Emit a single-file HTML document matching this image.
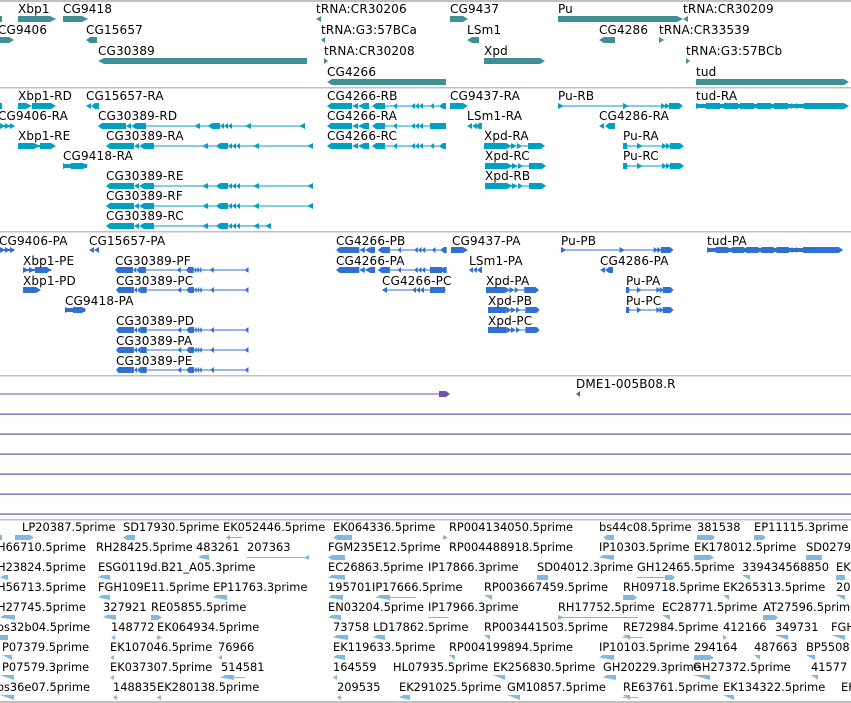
<!DOCTYPE html>
<html><head><meta charset="utf-8"><style>
html,body{margin:0;padding:0;background:#fff;width:851px;height:703px;overflow:hidden}
svg{display:block}
text{font-family:"DejaVu Sans","Liberation Sans",sans-serif;font-size:12px;fill:#000;letter-spacing:0.15px}
.e text{font-size:11.4px;letter-spacing:0}
</style></head><body>
<svg width="851" height="703" viewBox="0 0 851 703" xmlns="http://www.w3.org/2000/svg">
<defs>
<g id="t303">
<polygon points="0,0 4,-3 28,-3 28,3 4,3"/>
<polygon points="28,0 33,-3 33,3"/><polygon points="33,0 38,-3 38,3"/>
<rect x="38" y="-3" width="10" height="6"/>
<rect x="48" y="-0.5" width="159" height="1"/>
<polygon points="96,0 102,-3 102,3"/>
<polygon points="110,0 114,-3 122,-3 122,3 114,3"/>
<polygon points="122,0 126,-3 126,3"/><polygon points="126,0 130,-3 130,3"/><polygon points="130,0 134,-3 134,3"/>
<polygon points="147,0 153,-3 153,3"/>
<polygon points="201,0 207,-3 207,3"/>
</g>
<g id="t303s">
<polygon points="0,0 4,-3 28,-3 28,3 4,3"/>
<polygon points="28,0 33,-3 33,3"/><polygon points="33,0 38,-3 38,3"/>
<rect x="38" y="-3" width="10" height="6"/>
<rect x="48" y="-0.5" width="117" height="1"/>
<polygon points="96,0 102,-3 102,3"/>
<polygon points="110,0 114,-3 122,-3 122,3 114,3"/>
<polygon points="122,0 126,-3 126,3"/><polygon points="126,0 130,-3 130,3"/><polygon points="130,0 134,-3 134,3"/>
<polygon points="147,0 153,-3 153,3"/>
<polygon points="159,0 165,-3 165,3"/>
</g>
<g id="t4266">
<polygon points="0,0 4,-3 25,-3 25,3 4,3"/>
<polygon points="25,0 31,-3 31,3"/><polygon points="31,0 37,-3 37,3"/><rect x="37" y="-3" width="5" height="6"/>
<polygon points="45,0 49,-3 58,-3 58,3 49,3"/>
<rect x="58" y="-0.5" width="61" height="1"/>
<polygon points="66,0 70,-3 70,3"/>
<polygon points="84,0 88,-3 88,3"/><polygon points="88,0 92,-3 92,3"/><polygon points="92,0 96,-3 96,3"/>
<polygon points="103,0 107,-3 107,3"/>
<polygon points="112,0 116,-3 119,-3 119,3 116,3"/>
</g>
<g id="tXpd">
<polygon points="0,-3 6,0 0,3"/><polygon points="5,-3 11,0 5,3"/><polygon points="10,-3 16,0 10,3"/><polygon points="15,-3 21,0 15,3"/>
<rect x="0" y="-3" width="22" height="6"/>
<polygon points="22,-3 28,0 22,3"/><polygon points="27,-3 33,0 27,3"/><polygon points="33,-3 38,0 33,3"/>
<rect x="33" y="-0.5" width="12" height="1"/>
<polygon points="44,-3 57,-3 61,0 57,3 44,3"/>
</g>
<g id="tPu">
<polygon points="0,-3 6,0 0,3"/><rect x="0" y="-0.5" width="120" height="1"/>
<polygon points="65,-3 71,0 65,3"/>
<polygon points="103,-3 108,0 103,3"/><polygon points="107,-3 112,0 107,3"/>
<polygon points="111,-3 121,-3 125,0 121,3 111,3"/>
</g>
<g id="tPuA">
<polygon points="0,-3 6,0 0,3"/><rect x="0" y="-3" width="4" height="6"/><rect x="0" y="-0.5" width="56" height="1"/>
<polygon points="14,-3 20,0 14,3"/>
<polygon points="39,-3 44,0 39,3"/><polygon points="43,-3 48,0 43,3"/>
<polygon points="47,-3 57,-3 61,0 57,3 47,3"/>
</g>
<g id="ttud">
<polygon points="0,-3 6,0 0,3"/><rect x="0" y="-2" width="150" height="4"/>
<rect x="10" y="-3" width="14" height="6"/><rect x="28" y="-3" width="14" height="6"/><rect x="44" y="-3" width="14" height="6"/><rect x="61" y="-3" width="14" height="6"/><rect x="78" y="-3" width="14" height="6"/>
<polygon points="95,-3 100,0 95,3"/><polygon points="100,-3 105,0 100,3"/>
<polygon points="108,-3 148,-3 153,0 148,3 108,3"/>
</g>
</defs>

<g fill="#c0c0c0">
<rect x="0" y="0" width="851" height="2"/>
<rect x="0" y="87" width="851" height="1.5"/>
<rect x="0" y="231" width="851" height="1.5"/>
<rect x="0" y="375" width="851" height="1.5"/>
<rect x="0" y="519" width="851" height="1.5"/>
<rect x="0" y="701" width="851" height="2"/>
</g>

<g fill="#418f96">
<rect x="0" y="16" width="2" height="6"/>
<polygon points="18,16 50,16 56,19 50,22 18,22"/>
<polygon points="63,16 82,16 88,19 82,22 63,22"/>
<polygon points="316,19 321,16 321,22"/>
<polygon points="450,16 463,16 468,19 463,22 450,22"/>
<polygon points="558,16 677,16 683,19 677,22 558,22"/>
<polygon points="683,19 688,16 688,22"/>
<polygon points="0,37 9,37 14,40 9,43 0,43"/>
<polygon points="86,40 90,37 97,37 97,43 90,43"/>
<polygon points="321,40 325,37 325,43"/>
<polygon points="467,40 472,37 479,37 479,43 472,43"/>
<polygon points="599,40 604,37 615,37 615,43 604,43"/>
<polygon points="659,37 664,40 659,43"/>
<polygon points="98,61 104,58 307,58 307,64 104,64"/>
<polygon points="324,58 328,61 324,64"/>
<polygon points="484,58 540,58 545,61 540,64 484,64"/>
<polygon points="686,58 690,61 686,64"/>
<polygon points="327,82 332,79 446,79 446,85 332,85"/>
<polygon points="696,79 844,79 849,82 844,85 696,85"/>
</g>
<g>
<text x="18" y="13">Xbp1</text><text x="63" y="13">CG9418</text><text x="316" y="13">tRNA:CR30206</text>
<text x="450" y="13">CG9437</text><text x="558" y="13">Pu</text><text x="683" y="13">tRNA:CR30209</text>
<text x="-2" y="34">CG9406</text><text x="86" y="34">CG15657</text><text x="321" y="34">tRNA:G3:57BCa</text>
<text x="467" y="34">LSm1</text><text x="599" y="34">CG4286</text><text x="659" y="34">tRNA:CR33539</text>
<text x="98" y="55">CG30389</text><text x="324" y="55">tRNA:CR30208</text><text x="484" y="55">Xpd</text><text x="686" y="55">tRNA:G3:57BCb</text>
<text x="327" y="76">CG4266</text><text x="696" y="76">tud</text>
</g>

<g fill="#00a0c2">
<rect x="0" y="103" width="2" height="6"/>
<g transform="translate(18,106)"><polygon points="0,-3 6,0 0,3"/><rect x="0" y="-3" width="8" height="6"/><polygon points="8,-3 14,0 8,3"/><polygon points="14,-3 33,-3 38,0 33,3 14,3"/></g>
<g transform="translate(86,106)"><polygon points="0,0 5,-3 5,3"/><polygon points="5,0 9,-3 13,-3 13,3 9,3"/></g>
<use href="#t4266" x="327" y="106"/>
<g transform="translate(450,106)"><polygon points="0,-3 13,-3 18,0 13,3 0,3"/></g>
<use href="#tPu" x="558" y="106"/>
<use href="#ttud" x="696" y="106"/>
<g transform="translate(0,126)"><polygon points="0,-3 5,0 0,3"/><polygon points="5,-3 10,0 5,3"/><polygon points="10,-3 15,0 10,3"/><rect x="0" y="-1" width="14" height="2"/></g>
<use href="#t303" x="98" y="126"/>
<use href="#t4266" x="327" y="126"/>
<g transform="translate(467,126)"><polygon points="0,0 5,-3 5,3"/><polygon points="5,0 10,-3 10,3"/><polygon points="9,0 12,-3 15,-3 15,3 12,3"/></g>
<g transform="translate(599,126)"><polygon points="0,0 5,-3 5,3"/><polygon points="6,0 10,-3 16,-3 16,3 10,3"/></g>
<g transform="translate(18,146)"><rect x="0" y="-3" width="16" height="6"/><polygon points="16,-3 22,0 16,3"/><polygon points="22,-3 33,-3 38,0 33,3 22,3"/><rect x="0" y="-1" width="36" height="2"/></g>
<use href="#t303" x="106" y="146"/>
<use href="#t4266" x="327" y="146"/>
<use href="#tXpd" x="484" y="146"/>
<use href="#tPuA" x="623" y="146"/>
<g transform="translate(0,126)"><rect x="430" y="-3" width="13" height="6"/></g>
<g transform="translate(63,166)"><polygon points="0,-3 6,0 0,3"/><rect x="0" y="-2" width="24" height="4"/><polygon points="8,-3 20,-3 25,0 20,3 8,3"/></g>
<use href="#tXpd" x="485" y="166"/>
<use href="#tPuA" x="623" y="166"/>
<use href="#t303" x="106" y="186"/>
<use href="#tXpd" x="485" y="186"/>
<use href="#t303" x="106" y="206"/>
<use href="#t303s" x="106" y="226"/>
</g>
<g>
<text x="18" y="100">Xbp1-RD</text><text x="86" y="100">CG15657-RA</text><text x="327" y="100">CG4266-RB</text>
<text x="450" y="100">CG9437-RA</text><text x="558" y="100">Pu-RB</text><text x="696" y="100">tud-RA</text>
<text x="-2" y="120">CG9406-RA</text><text x="98" y="120">CG30389-RD</text><text x="327" y="120">CG4266-RA</text>
<text x="467" y="120">LSm1-RA</text><text x="599" y="120">CG4286-RA</text>
<text x="18" y="140">Xbp1-RE</text><text x="106" y="140">CG30389-RA</text><text x="327" y="140">CG4266-RC</text>
<text x="484" y="140">Xpd-RA</text><text x="623" y="140">Pu-RA</text>
<text x="63" y="160">CG9418-RA</text><text x="485" y="160">Xpd-RC</text><text x="623" y="160">Pu-RC</text>
<text x="106" y="180">CG30389-RE</text><text x="485" y="180">Xpd-RB</text>
<text x="106" y="200">CG30389-RF</text>
<text x="106" y="220">CG30389-RC</text>
</g>

<g fill="#3070d2">
<g transform="translate(0,250)"><polygon points="0,-3 5,0 0,3"/><polygon points="5,-3 10,0 5,3"/><polygon points="10,-3 15,0 10,3"/><rect x="0" y="-1" width="14" height="2"/></g>
<g transform="translate(89,250)"><polygon points="0,0 5,-3 5,3"/><polygon points="5,0 10,-3 10,3"/></g>
<g transform="translate(336,250) scale(0.93,1)"><use href="#t4266"/></g>
<g transform="translate(451,250)"><polygon points="0,-3 12,-3 17,0 12,3 0,3"/></g>
<g transform="translate(561,250) scale(0.9,1)"><use href="#tPu"/></g>
<g transform="translate(707,250) scale(0.89,1)"><use href="#ttud"/></g>
<g transform="translate(23,270)"><polygon points="0,-3 6,0 0,3"/><rect x="0" y="-1" width="28" height="2"/><polygon points="6,-3 12,0 6,3"/><polygon points="12,-3 24,-3 28,0 24,3 12,3"/></g>
<g transform="translate(115,270) scale(0.645,1)"><use href="#t303"/></g>
<g transform="translate(336,270) scale(0.93,1)"><use href="#t4266"/></g>
<g transform="translate(469,270)"><polygon points="0,0 4,-3 4,3"/><polygon points="4,0 8,-3 8,3"/><polygon points="8,0 12,-3 13,-3 13,3 12,3"/></g>
<g transform="translate(600,270)"><polygon points="0,0 5,-3 5,3"/><polygon points="5,0 9,-3 13,-3 13,3 9,3"/></g>
<g transform="translate(23,290)"><polygon points="0,-3 13,-3 18,0 13,3 0,3"/></g>
<g transform="translate(116,290) scale(0.64,1)"><use href="#t303"/></g>
<g transform="translate(382,290)"><polygon points="0,0 5,-3 5,3"/><rect x="0" y="-0.5" width="64" height="1"/><polygon points="30,0 34,-3 34,3"/><polygon points="34,0 38,-3 38,3"/><polygon points="38,0 42,-3 42,3"/><polygon points="53,0 57,-3 63,-3 63,3 57,3"/></g>
<g transform="translate(486,290) scale(0.87,1)"><use href="#tXpd"/></g>
<g transform="translate(626,290) scale(0.78,1)"><use href="#tPuA"/></g>
<g transform="translate(65,310)"><polygon points="0,-3 6,0 0,3"/><rect x="0" y="-2" width="20" height="4"/><polygon points="8,-3 17,-3 21,0 17,3 8,3"/></g>
<g transform="translate(488,310) scale(0.85,1)"><use href="#tXpd"/></g>
<g transform="translate(626,310) scale(0.78,1)"><use href="#tPuA"/></g>
<g transform="translate(488,330) scale(0.85,1)"><use href="#tXpd"/></g>
<g transform="translate(116,330) scale(0.64,1)"><use href="#t303"/></g>
<g transform="translate(116,350) scale(0.64,1)"><use href="#t303"/></g>
<g transform="translate(116,370) scale(0.64,1)"><use href="#t303"/></g>
<g transform="translate(430,270)"><rect x="0" y="-3" width="12" height="6"/><polygon points="11,0 15,-3 15,3"/></g>
<g transform="translate(430,290)"><rect x="0" y="-3" width="12" height="6"/><polygon points="11,0 15,-3 15,3"/></g>
</g>
<g>
<text x="-1" y="245">CG9406-PA</text><text x="89" y="245">CG15657-PA</text><text x="336" y="245">CG4266-PB</text>
<text x="452" y="245">CG9437-PA</text><text x="561" y="245">Pu-PB</text><text x="707" y="245">tud-PA</text>
<text x="23" y="265">Xbp1-PE</text><text x="115" y="265">CG30389-PF</text><text x="336" y="265">CG4266-PA</text>
<text x="469" y="265">LSm1-PA</text><text x="600" y="265">CG4286-PA</text>
<text x="23" y="285">Xbp1-PD</text><text x="116" y="285">CG30389-PC</text><text x="382" y="285">CG4266-PC</text>
<text x="486" y="285">Xpd-PA</text><text x="626" y="285">Pu-PA</text>
<text x="65" y="305">CG9418-PA</text><text x="488" y="305">Xpd-PB</text><text x="626" y="305">Pu-PC</text>
<text x="116" y="325">CG30389-PD</text><text x="488" y="325">Xpd-PC</text>
<text x="116" y="345">CG30389-PA</text>
<text x="116" y="365">CG30389-PE</text>
</g>

<g fill="#7050b4">
<rect x="0" y="393.5" width="440" height="1"/>
<polygon points="439,391 446,391 450,394 446,397 439,397"/>
<polygon points="576,394 580,391 580,397"/>
<rect x="0" y="413.5" width="851" height="1.2"/>
<rect x="0" y="433.5" width="851" height="1.2"/>
<rect x="0" y="453.5" width="851" height="1.2"/>
<rect x="0" y="473.5" width="851" height="1.2"/>
<rect x="0" y="493.5" width="851" height="1.2"/>
<rect x="0" y="513.5" width="851" height="1.2"/>
</g>
<text x="576" y="388">DME1-005B08.R</text>

<g fill="#80b8e0">
<rect x="0" y="535" width="2" height="5"/><polygon points="15,535 30,535 34,537.5 30,540 15,540"/>
<polygon points="123,537.5 127,535 135,535 135,540 127,540"/><rect x="226" y="537" width="16" height="1"/><polygon points="226,537.5 230,535 230,540"/><polygon points="333,537.5 337,535 352,535 352,540 337,540"/>
<polygon points="443,535 448,537.5 443,540"/><polygon points="603,537.5 607,535 614,535 614,540 607,540"/><polygon points="697,535 712,535 715,537.5 712,540 697,540"/><polygon points="754,535 763,535 766,537.5 763,540 754,540"/>
<polygon points="198,557.5 202,555 209,555 209,560"/><rect x="247" y="557" width="62" height="1"/><polygon points="304,557.5 309,555 309,560"/><polygon points="328,557.5 332,555 345,555 345,560 332,560"/><polygon points="599,557.5 603,555 614,555 614,560"/><polygon points="694,555 710,555 714,557.5 710,560 694,560"/><polygon points="806,555 822,555 822,560 806,560"/>
<polygon points="0,577.5 4,575 8,575 8,580"/><polygon points="98,577.5 102,575 110,575 110,580"/><polygon points="328,577.5 332,575 345,575 345,580"/><polygon points="537,575 548,575 548,580 537,580"/><rect x="637" y="577" width="30" height="1"/><polygon points="665,575 672,575 675,577.5 672,580 665,580"/><polygon points="742,575 750,575 750,580"/><polygon points="836,575 845,575 845,580 836,580"/>
<polygon points="98,597.5 102,595 110,595 110,600"/><polygon points="213,597.5 217,595 227,595 227,600"/><polygon points="328,597.5 332,595 343,595 343,600"/><rect x="376" y="597" width="40" height="1"/><polygon points="376,597.5 380,595 390,595 390,600"/><polygon points="484,595 492,595 492,600"/><polygon points="623,595 634,595 637,597.5 634,600 623,600"/><polygon points="723,595 729,595 729,600"/><polygon points="836,595 845,595 845,600"/>
<polygon points="103,617.5 107,615 116,615 116,620"/><polygon points="151,615 158,615 162,617.5 158,620 151,620"/><polygon points="328,617.5 332,615 341,615 341,620"/><rect x="428" y="617" width="20" height="1"/><polygon points="0,617.5 4,615 15,615 15,620"/><rect x="558" y="617" width="80" height="1"/><polygon points="558,615 564,617.5 558,620"/><polygon points="662,615 670,615 670,620"/><polygon points="763,615 775,615 778,617.5 775,620 763,620"/>
<polygon points="0,635 8,635 8,640 0,640"/><polygon points="111,637.5 115,635 115,640"/><polygon points="157,635 162,637.5 157,640"/><polygon points="333,637.5 337,635 348,635 348,640"/><polygon points="373,637.5 377,635 385,635 385,640"/><polygon points="484,635 490,635 490,640"/><rect x="623" y="637" width="20" height="1"/><polygon points="623,635 630,635 630,640"/><polygon points="723,635 727,637.5 723,640"/><polygon points="775,635 788,635 788,640"/><polygon points="831,635 845,635 845,640"/>
<polygon points="2,655 12,655 12,660"/><polygon points="110,657.5 114,655 114,660"/><polygon points="218,657.5 222,655 222,660"/><polygon points="333,657.5 337,655 345,655 345,660"/><polygon points="449,655 455,655 455,660"/><polygon points="599,657.5 603,655 614,655 614,660"/><polygon points="694,655 710,655 714,657.5 710,660 694,660"/><polygon points="754,655 760,655 760,660"/><polygon points="806,655 815,655 815,660"/>
<polygon points="0,675 14,675 14,680"/><polygon points="110,677.5 114,675 114,680"/><rect x="221" y="677" width="24" height="1"/><polygon points="221,677.5 225,675 234,675 234,680"/><polygon points="333,677.5 337,675 337,680"/><polygon points="493,675 505,675 505,680"/><polygon points="603,677.5 607,675 616,675 616,680"/><polygon points="693,675 710,675 710,680"/><polygon points="811,675 818,675 818,680"/>
<polygon points="0,695 14,695 14,700"/><polygon points="113,697.5 117,695 117,700"/><polygon points="157,697.5 161,695 161,700"/><polygon points="337,697.5 341,695 341,700"/><polygon points="399,697.5 403,695 410,695 410,700"/><polygon points="507,695 520,695 520,700"/><rect x="623" y="697" width="15" height="1"/><polygon points="623,695 630,695 630,700"/><polygon points="723,695 734,695 734,700"/>
</g>
<g class="e">
<text x="22" y="531">LP20387.5prime</text><text x="123" y="531">SD17930.5prime</text><text x="223" y="531">EK052446.5prime</text><text x="333" y="531">EK064336.5prime</text><text x="449" y="531">RP004134050.5prime</text><text x="599" y="531">bs44c08.5prime</text><text x="697" y="531">381538</text><text x="754" y="531">EP11115.3prime</text>
<text x="-3" y="551">H66710.5prime</text><text x="96" y="551">RH28425.5prime</text><text x="196" y="551">483261</text><text x="247" y="551">207363</text><text x="328" y="551">FGM235E12.5prime</text><text x="449" y="551">RP004488918.5prime</text><text x="599" y="551">IP10303.5prime</text><text x="694" y="551">EK178012.5prime</text><text x="806" y="551">SD0279</text>
<text x="-3" y="571">H23824.5prime</text><text x="98" y="571">ESG0119d.B21_A05.3prime</text><text x="328" y="571">EC26863.5prime</text><text x="428" y="571">IP17866.3prime</text><text x="537" y="571">SD04012.3prime</text><text x="637" y="571">GH12465.5prime</text><text x="742" y="571">339434568850</text><text x="836" y="571">EK</text>
<text x="-3" y="591">H56713.5prime</text><text x="98" y="591">FGH109E11.5prime</text><text x="213" y="591">EP11763.3prime</text><text x="328" y="591">195701</text><text x="372" y="591">IP17666.5prime</text><text x="484" y="591">RP003667459.5prime</text><text x="623" y="591">RH09718.5prime</text><text x="723" y="591">EK265313.5prime</text><text x="836" y="591">20</text>
<text x="-3" y="611">H27745.5prime</text><text x="103" y="611">327921</text><text x="151" y="611">RE05855.5prime</text><text x="328" y="611">EN03204.5prime</text><text x="428" y="611">IP17966.3prime</text><text x="558" y="611">RH17752.5prime</text><text x="662" y="611">EC28771.5prime</text><text x="763" y="611">AT27596.5prime</text>
<text x="-3" y="631">os32b04.5prime</text><text x="111" y="631">148772</text><text x="157" y="631">EK064934.5prime</text><text x="333" y="631">73758</text><text x="373" y="631">LD17862.5prime</text><text x="484" y="631">RP003441503.5prime</text><text x="623" y="631">RE72984.5prime</text><text x="723" y="631">412166</text><text x="775" y="631">349731</text><text x="831" y="631">FGH</text>
<text x="2" y="651">P07379.5prime</text><text x="110" y="651">EK107046.5prime</text><text x="218" y="651">76966</text><text x="333" y="651">EK119633.5prime</text><text x="449" y="651">RP004199894.5prime</text><text x="599" y="651">IP10103.5prime</text><text x="694" y="651">294164</text><text x="754" y="651">487663</text><text x="806" y="651">BP5508</text>
<text x="2" y="671">P07579.3prime</text><text x="110" y="671">EK037307.5prime</text><text x="221" y="671">514581</text><text x="333" y="671">164559</text><text x="393" y="671">HL07935.5prime</text><text x="493" y="671">EK256830.5prime</text><text x="603" y="671">GH20229.3prime</text><text x="693" y="671">GH27372.5prime</text><text x="811" y="671">41577</text>
<text x="-3" y="691">os36e07.5prime</text><text x="113" y="691">148835</text><text x="157" y="691">EK280138.5prime</text><text x="337" y="691">209535</text><text x="399" y="691">EK291025.5prime</text><text x="507" y="691">GM10857.5prime</text><text x="623" y="691">RE63761.5prime</text><text x="723" y="691">EK134322.5prime</text><text x="841" y="691">EH</text>
</g>
</svg>
</body></html>
